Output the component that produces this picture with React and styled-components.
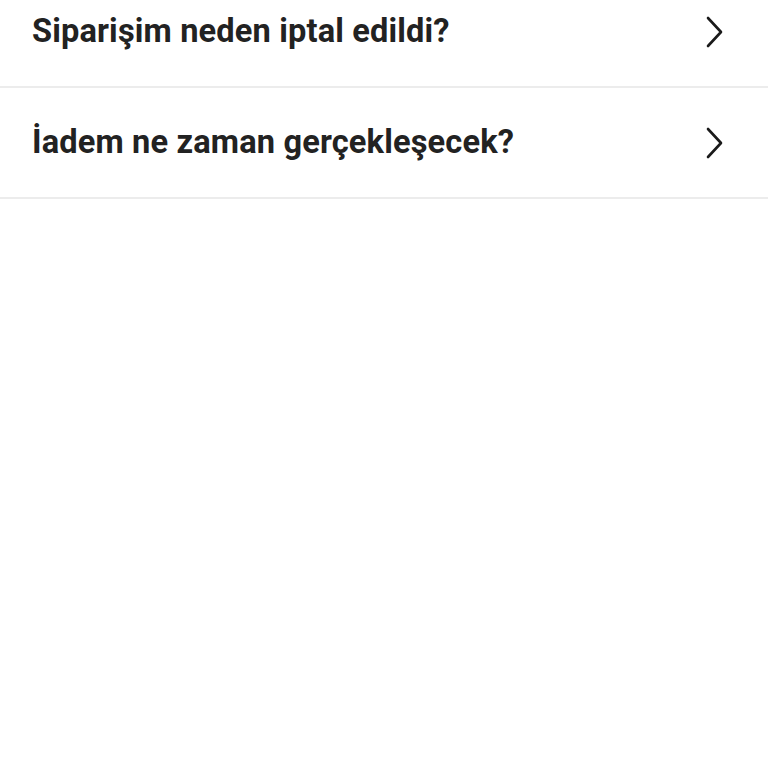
import React from 'react'
import styled, { createGlobalStyle } from 'styled-components'

const Global = createGlobalStyle`
    html, body {
        margin:0;
        padding:0;
        background:#fff;
    }
    body {
        font-family: Roboto, "Noto Sans", "Liberation Sans", sans-serif;
    }
`

const List = styled.ul`
    list-style:none;
    margin:-23px 0 0 0;
    padding:0;
`

const Row = styled.li`
    height:111px;
    display:flex;
    align-items:center;
    justify-content:space-between;
    padding:0 44px 0 32px;
    border-bottom:2px solid #ececec;
    box-sizing:border-box;
`

const Question = styled.span`
    font-size:32.6px;
    font-weight:700;
    color:#222;
    letter-spacing:0.15px;
    padding-bottom:2px;
`

const Chevron = () => (
    <svg width="20" height="32" viewBox="0 0 20 32" fill="none">
        <path d="M4 2 L17 16 L4 30" stroke="#1a1a1a" strokeWidth="2.6" strokeLinecap="round" strokeLinejoin="round" />
    </svg>
)

const questions = [
    'Siparişim neden iptal edildi?',
    'İadem ne zaman gerçekleşecek?',
]

function App() {
    return (
        <>
            <Global />
            <List>
                {questions.map(q => (
                    <Row key={q}>
                        <Question>{q}</Question>
                        <Chevron />
                    </Row>
                ))}
            </List>
        </>
    )
}

export default App
